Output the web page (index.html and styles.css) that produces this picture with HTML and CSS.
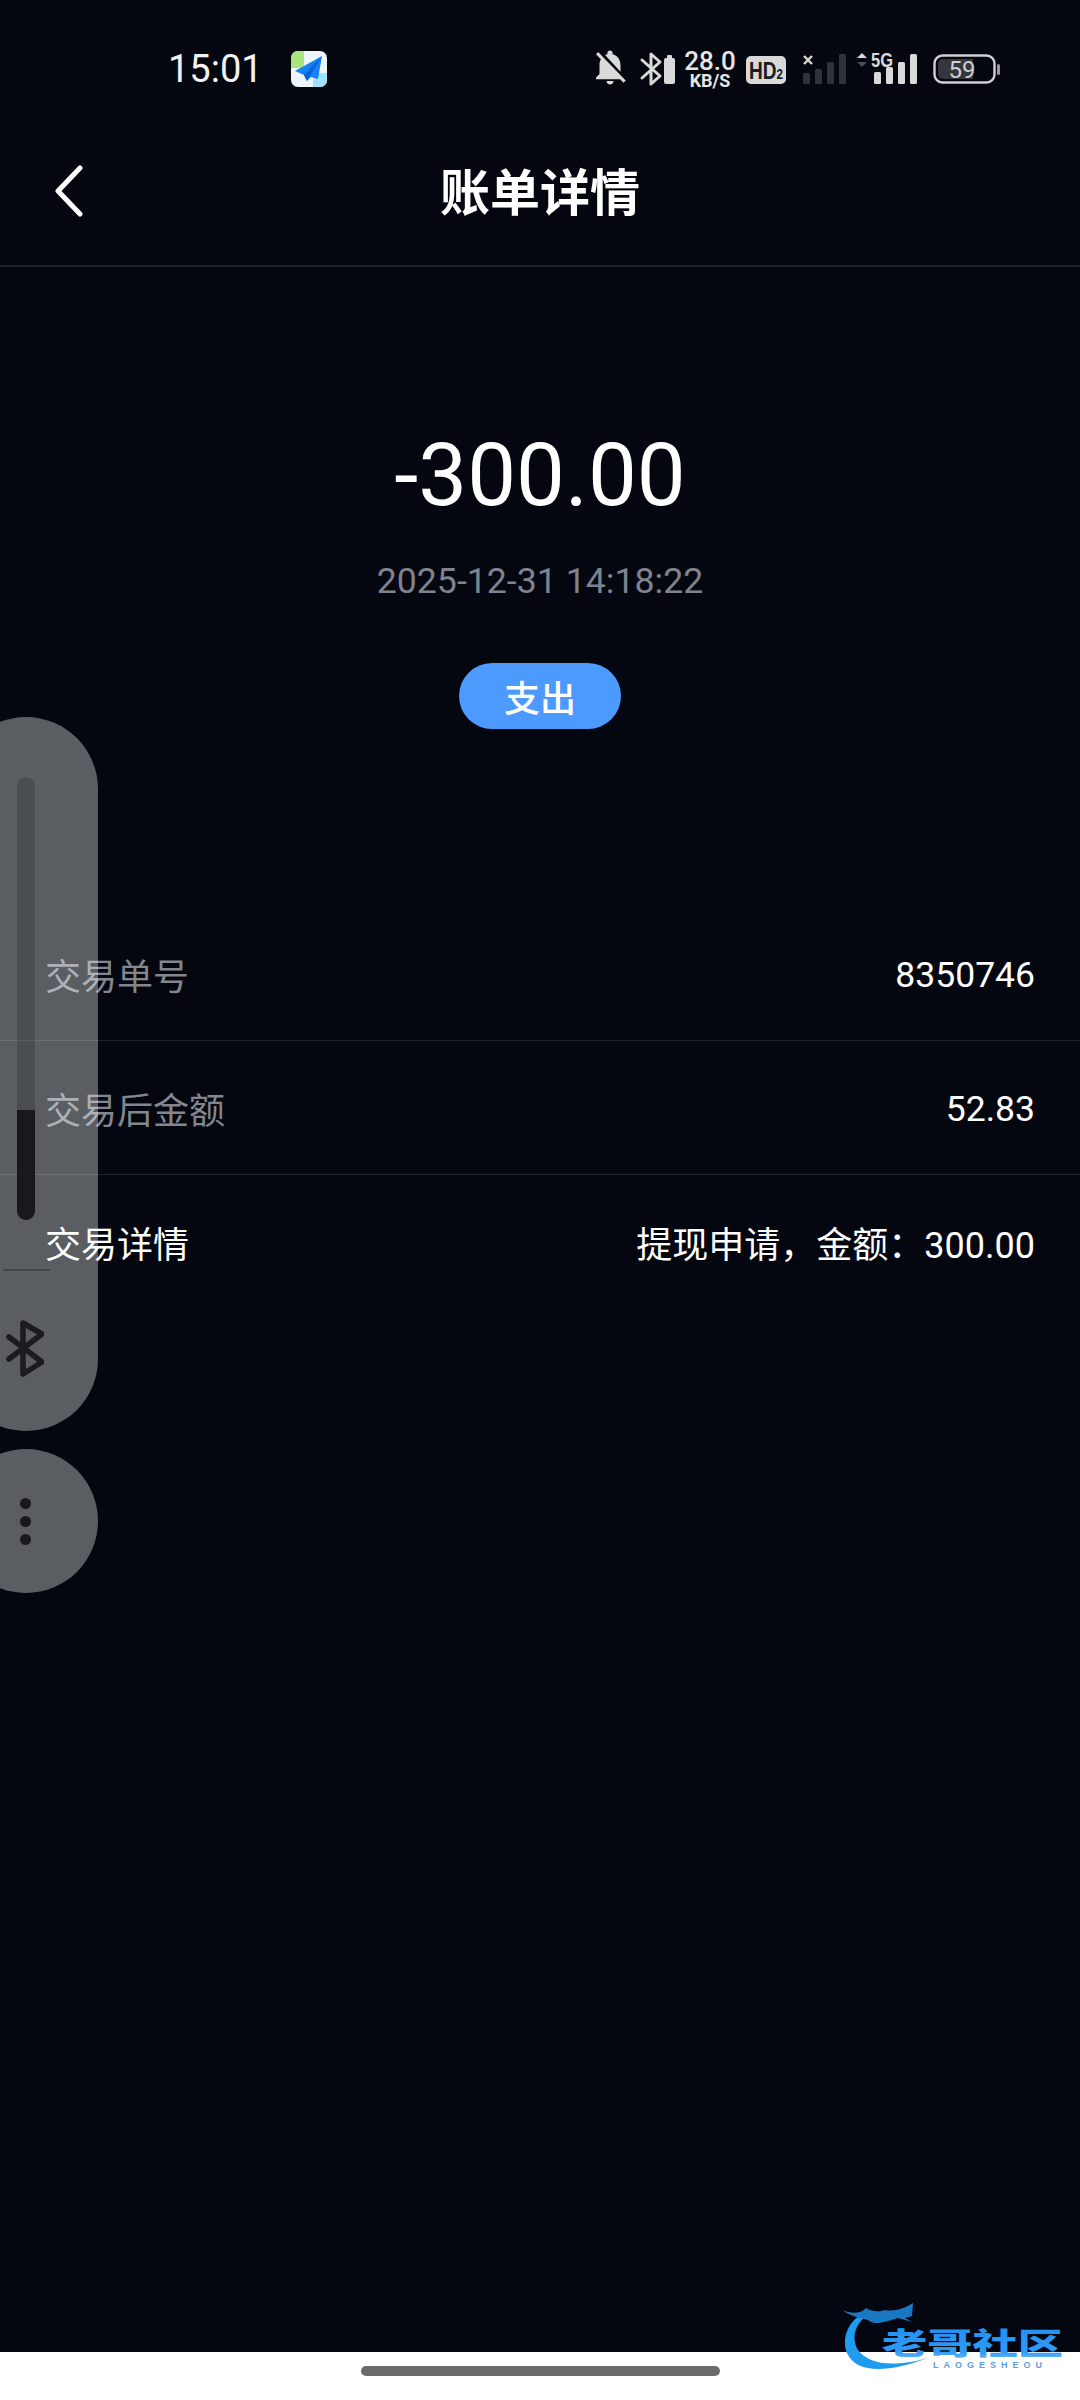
FILE: index.html
```html
<!DOCTYPE html>
<html lang="zh-CN">
<head>
<meta charset="utf-8">
<title>账单详情</title>
<link rel="stylesheet" href="styles.css">
</head>
<body>
<div class="screen">
  <div class="status">
    <span class="time">15:01</span>
    <svg class="app-icon" viewBox="0 0 36 36" width="36" height="36">
      <defs><clipPath id="appclip"><rect width="36" height="36" rx="7"/></clipPath></defs>
      <g clip-path="url(#appclip)">
        <rect width="36" height="36" fill="#eef5f8"/>
        <rect width="13" height="17" fill="#a9e57e"/>
        <rect x="22" y="22" width="14" height="14" fill="#9fe3fb"/>
        <path d="M31 5 L4 20 L13 24 L16 30 L20 26 L27 28 Z" fill="#1482f5"/>
        <path d="M31 5 L13 24 L16 30 Z" fill="#0a62d6"/>
      </g>
    </svg>
    <svg class="status-right" viewBox="590 47 412 44" width="412" height="44">
      <svg x="589" y="46" width="42" height="42" viewBox="0 0 24 24">
        <path fill="#d9d9d9" d="M20 18.69L7.84 6.14 5.27 3.49 4 4.76l2.8 2.8v.01c-.52.99-.8 2.16-.8 3.42v5l-2 2v1h13.73l2 2L21 19.72l-1-1.03zM12 22c1.11 0 2-.89 2-2h-4c0 1.11.89 2 2 2zm6-7.32V11c0-3.08-1.64-5.64-4.5-6.32V4c0-.83-.67-1.5-1.5-1.5s-1.5.67-1.5 1.5v.68c-.15.03-.29.08-.42.12-.1.03-.2.07-.3.11h-.01c-.2.08-.4.17-.59.27-.01 0-.01 0-.02.01L18 14.68z"/>
      </svg>
      <path d="M642 60 L660 76 L651 84 L651 54 L660 62 L642 78" fill="none" stroke="#d9d9d9" stroke-width="3" stroke-linejoin="round" stroke-linecap="round"/>
      <rect x="664" y="58" width="11" height="26" rx="2" fill="#d9d9d9"/>
      <rect x="667" y="55" width="5" height="4" rx="1" fill="#d9d9d9"/>
      <text text-anchor="middle"><tspan x="710" y="70" class="speed-top">28.0</tspan><tspan x="710" y="87" class="speed-bottom">KB/S</tspan></text>
      <rect x="746" y="56" width="40" height="28" rx="5" fill="#d9d9d9"/>
      <text x="749" y="79" class="hd" textLength="34" lengthAdjust="spacingAndGlyphs">HD<tspan class="hd-sub">2</tspan></text>
      <path d="M804 56 L812 64 M812 56 L804 64" stroke="#d9d9d9" stroke-width="2.4" fill="none"/>
      <rect x="803" y="73" width="7" height="11" rx="1.5" fill="#2f3239"/>
      <rect x="815" y="69" width="7" height="15" rx="1.5" fill="#2f3239"/>
      <rect x="827" y="62" width="7" height="22" rx="1.5" fill="#2f3239"/>
      <rect x="839" y="54" width="7" height="30" rx="1.5" fill="#2f3239"/>
      <path d="M857 58 L862 53 L867 58 Z" fill="#d9d9d9"/>
      <path d="M857 62 L867 62 L862 67 Z" fill="#4a4d53"/>
      <text x="871" y="67" class="five-g" textLength="22" lengthAdjust="spacingAndGlyphs">5G</text>
      <rect x="874" y="72" width="7" height="12" rx="1.5" fill="#d9d9d9"/>
      <rect x="886" y="67" width="7" height="17" rx="1.5" fill="#d9d9d9"/>
      <rect x="898" y="62" width="7" height="22" rx="1.5" fill="#d9d9d9"/>
      <rect x="910" y="54" width="7" height="30" rx="1.5" fill="#d9d9d9"/>
      <rect x="934.5" y="55.5" width="60" height="27" rx="8" fill="none" stroke="#d0d0d0" stroke-width="2.4"/>
      <path d="M943 59 H973 V79 H943 A5 5 0 0 1 938 74 V64 A5 5 0 0 1 943 59 Z" fill="#34373e"/>
      <text x="962" y="78" class="batt" text-anchor="middle">59</text>
      <rect x="997" y="64" width="3" height="11" rx="1.5" fill="#9a9a9a"/>
    </svg>
  </div>

  <header class="nav">
    <svg class="back" viewBox="0 0 30 52" width="30" height="52">
      <path d="M26 3 L4 26 L26 49" fill="none" stroke="#fff" stroke-width="5" stroke-linecap="round" stroke-linejoin="round"/>
    </svg>
    <h1 class="title">账单详情</h1>
  </header>

  <section class="hero">
    <div class="amount">-300.00</div>
    <div class="date">2025-12-31 14:18:22</div>
    <div class="pill">支出</div>
  </section>

  <section class="rows">
    <div class="row"><span class="label">交易单号</span><span class="value">8350746</span></div>
    <div class="row"><span class="label">交易后金额</span><span class="value">52.83</span></div>
    <div class="row row-last"><span class="label label-strong">交易详情</span><span class="value value-long">提现申请，金额：300.00</span></div>
  </section>

  <div class="spacer"></div>
  <div class="home-bar"><div class="handle"></div></div>

  <aside class="volume-panel">
    <div class="track"><div class="track-fill"></div></div>
    <div class="panel-rule"></div>
    <svg class="panel-bt" viewBox="0 0 38 58" width="38" height="58">
      <path d="M3 17 L36 42 L17 54 L17 3 L36 14 L3 39" fill="none" stroke="#1a1c20" stroke-width="5.6" stroke-linejoin="round" stroke-linecap="round"/>
    </svg>
  </aside>
  <aside class="more-button">
    <span class="dot"></span><span class="dot"></span><span class="dot"></span>
  </aside>

  <svg class="watermark" viewBox="800 2280 280 120" width="280" height="120">
    <defs>
      <linearGradient id="wmtext" x1="0" y1="0" x2="0" y2="1">
        <stop offset="0" stop-color="#1f8df2"/>
        <stop offset="0.75" stop-color="#2f9bf5"/>
        <stop offset="1" stop-color="#8cc8f8"/>
      </linearGradient>
    </defs>
    <path d="M864 2313 C846 2322 841 2342 848 2355 C857 2372 885 2374 928 2358 C892 2368 868 2364 858 2350 C851 2338 855 2323 868 2315 Z" fill="#1f9bf0"/>
    <path d="M842 2310 C852 2314 860 2314 866 2308 C872 2312 880 2312 885 2310 C895 2312 905 2308 913 2303 L912 2316 L905 2318 L912 2322 L898 2318 C885 2322 875 2326 868 2320 C860 2318 850 2316 842 2310 Z" fill="#1878c4"/>
    <text class="wm-cn" x="882" y="2354" textLength="181" lengthAdjust="spacingAndGlyphs" fill="url(#wmtext)">老哥社区</text>
    <text class="wm-en" x="933" y="2368" textLength="109" fill="#5f9fe0">LAOGESHEOU</text>
  </svg>
</div>
</body>
</html>
```
FILE: styles.css
```css
* { box-sizing: border-box; }
html, body { margin: 0; padding: 0; }
body {
  width: 1080px;
  height: 2400px;
  overflow: hidden;
  background: #04070f;
  font-family: Roboto, "Noto Sans CJK SC", sans-serif;
  color: #fff;
}
.screen {
  position: relative;
  width: 1080px;
  height: 2400px;
  display: flex;
  flex-direction: column;
  overflow: hidden;
  background: #04070f;
}
.status {
  height: 138px;
  flex: none;
  display: flex;
  align-items: center;
  padding-left: 168px;
  padding-right: 78px;
}
.time { font-size: 38px; line-height: 44px; color: #f2f2f2; width: 93px; }
.app-icon { margin-left: 30px; display: block; }
.status-right { margin-left: auto; display: block; }
.speed-top { font: 500 26px Roboto, sans-serif; fill: #e6e6e6; }
.speed-bottom { font: 700 18px Roboto, sans-serif; fill: #e6e6e6; }
.hd { font: 700 23px "Liberation Sans", sans-serif; fill: #1b1c20; }
.hd-sub { font-size: 14px; }
.five-g { font: 700 20px "Liberation Sans", sans-serif; fill: #d9d9d9; }
.batt { font: 400 24px Roboto, sans-serif; fill: #d0d0d0; }

.nav {
  height: 129px;
  flex: none;
  display: flex;
  align-items: center;
  justify-content: center;
  position: relative;
  border-bottom: 2px solid #20242d;
  padding-bottom: 25px;
}
.back { position: absolute; left: 54px; top: 27px; display: block; }
.title {
  margin: 0;
  font-size: 50px;
  line-height: 70px;
  font-weight: 700;
  font-family: "Noto Sans CJK SC", sans-serif;
  color: #fff;
}
.hero {
  flex: none;
  display: flex;
  flex-direction: column;
  align-items: center;
  padding-top: 156px;
}
.amount { font-size: 87px; line-height: 104px; color: #fff; }
.date { font-size: 35.7px; line-height: 44px; margin-top: 32px; color: #7f838f; }
.pill {
  margin-top: 60px;
  width: 162px;
  height: 66px;
  border-radius: 33px;
  background: #4d9aff;
  display: flex;
  align-items: center;
  justify-content: center;
  font: 500 36px "Noto Sans CJK SC", sans-serif;
  color: #fff;
}
.rows { flex: none; margin-top: 178px; }
.row {
  height: 134px;
  display: flex;
  align-items: center;
  justify-content: space-between;
  padding: 0 45px;
  border-bottom: 1px solid #20232c;
  font-size: 36px;
}
.row-last { border-bottom: none; }
.label { color: #83868f; font-family: "Noto Sans CJK SC", sans-serif; font-weight: 400; }
.label-strong { color: #fff; }
.value { color: #fff; font-size: 35.5px; padding-top: 2px; font-family: Roboto, "Noto Sans CJK SC", sans-serif; }
.value-long { font-size: 36px; padding-top: 0; }

.spacer { flex: 1; }
.home-bar {
  flex: none;
  height: 48px;
  background: #fff;
  display: flex;
  justify-content: center;
  padding-top: 14px;
}
.handle { width: 359px; height: 10px; border-radius: 5px; background: #6b6b6b; }

.volume-panel {
  position: absolute;
  left: -46px;
  top: 717px;
  width: 144px;
  height: 714px;
  border-radius: 72px;
  background: rgba(252, 255, 255, 0.35);
  display: flex;
  flex-direction: column;
  align-items: center;
}
.track {
  margin-top: 60px;
  width: 18px;
  height: 443px;
  border-radius: 9px;
  background: rgba(0, 0, 0, 0.17);
  display: flex;
  flex-direction: column;
  justify-content: flex-end;
  overflow: hidden;
}
.track-fill { height: 110px; background: #17191d; }
.panel-rule { margin-top: 49px; width: 47px; height: 2px; background: #43474c; }
.panel-bt { margin-top: 49px; display: block; margin-left: -2px; }
.more-button {
  position: absolute;
  left: -46px;
  top: 1449px;
  width: 144px;
  height: 144px;
  border-radius: 50%;
  background: rgba(252, 255, 255, 0.35);
  display: flex;
  flex-direction: column;
  align-items: center;
  justify-content: center;
  gap: 7px;
}
.dot { width: 11px; height: 11px; border-radius: 50%; background: #17191d; margin-left: -2px; }
.watermark { position: absolute; left: 800px; top: 2280px; display: block; }
.wm-cn { font: 900 30px "Noto Sans CJK SC", sans-serif; }
.wm-en { font: 700 9px "Liberation Sans", sans-serif; }
```
